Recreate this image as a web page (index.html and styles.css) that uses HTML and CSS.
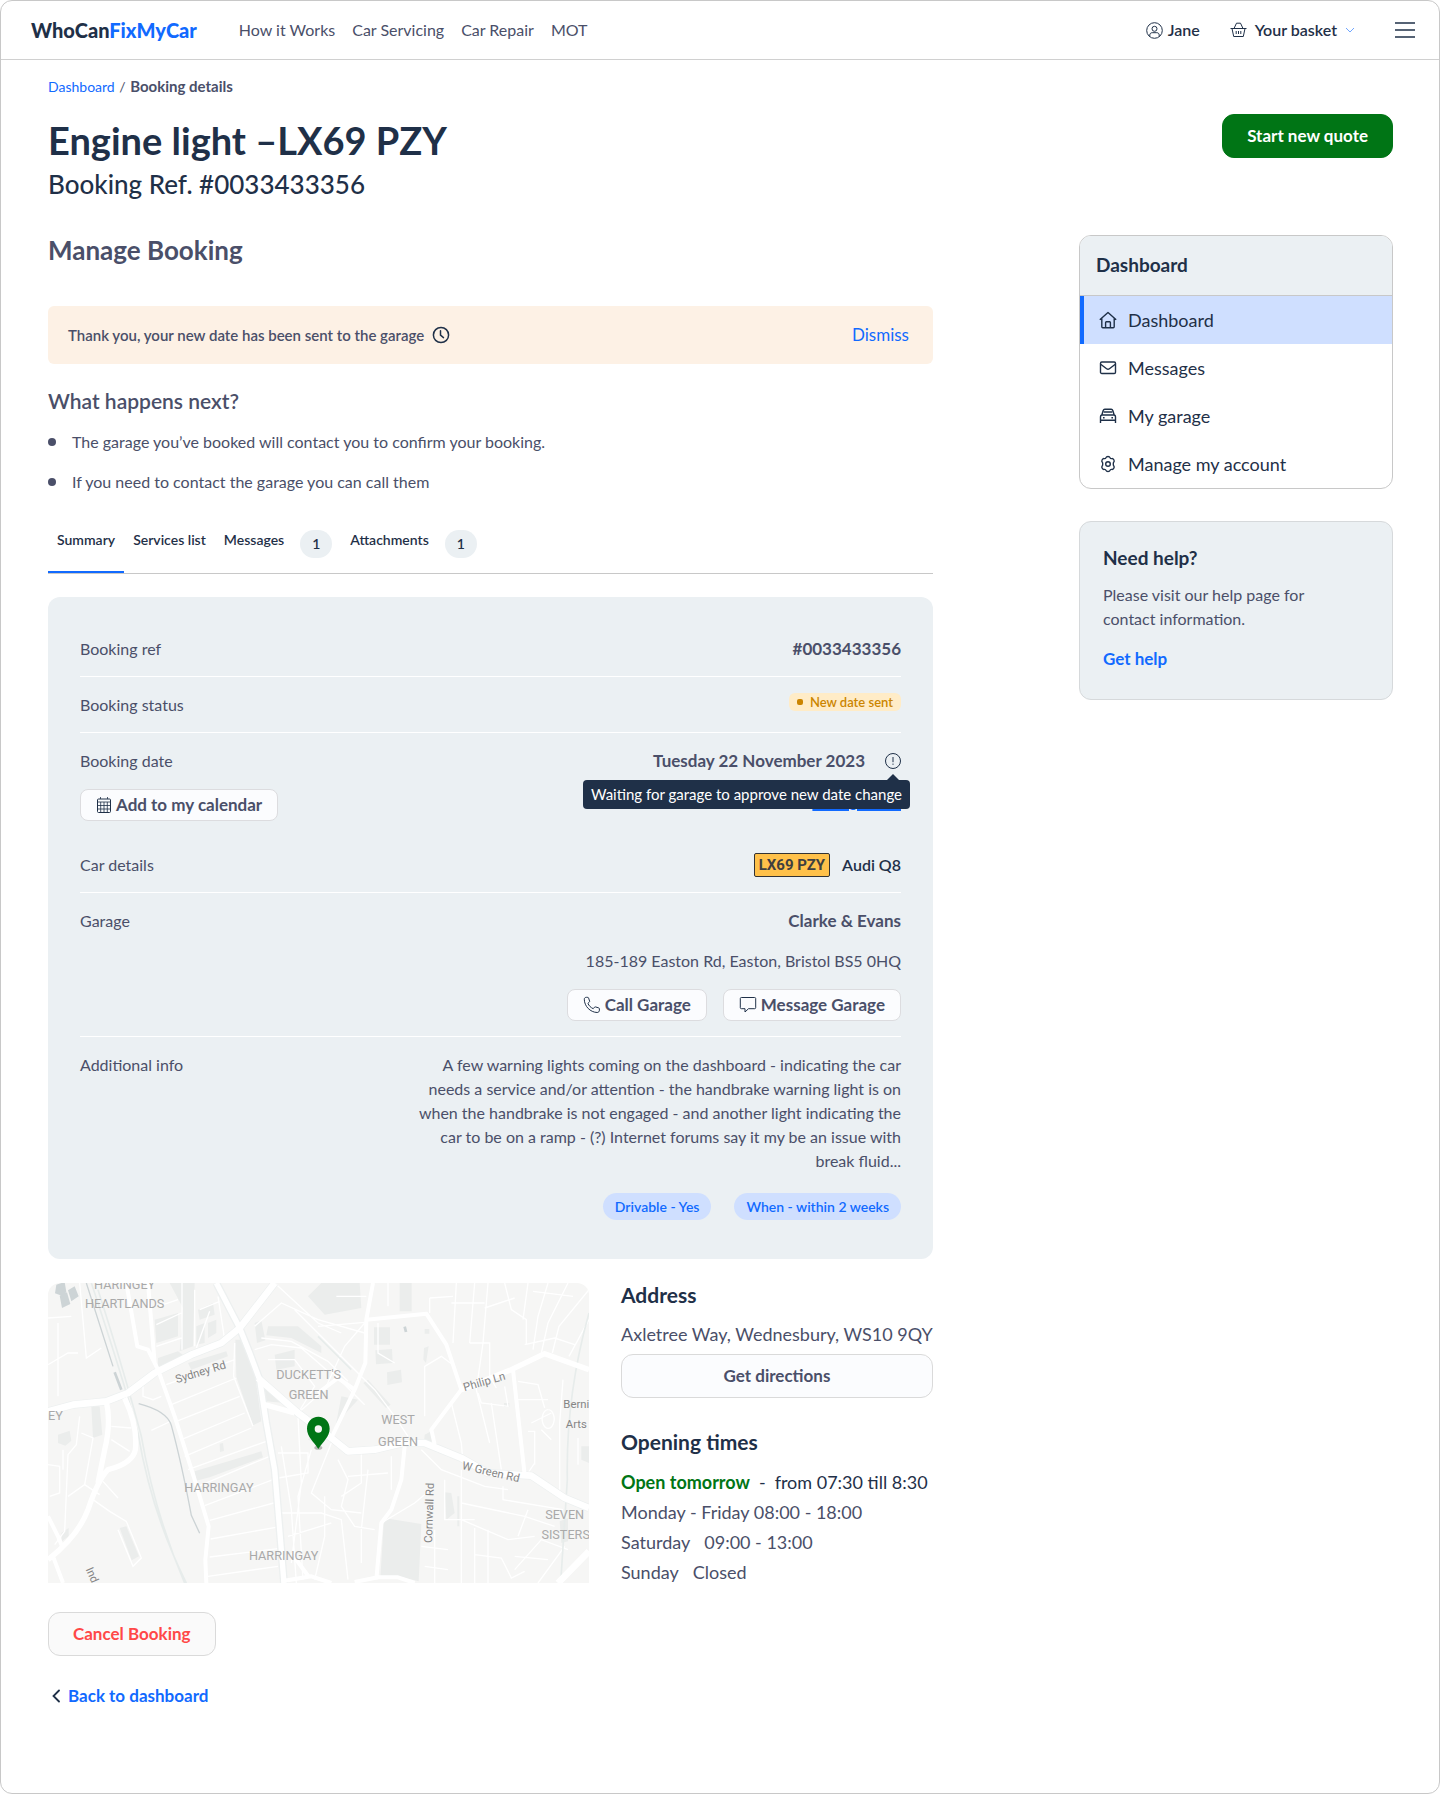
FILE: index.html
```
<!DOCTYPE html>
<html lang="en">
<head>
    <meta charset="UTF-8">
    <meta name="viewport" content="width=device-width, initial-scale=1.0">
    <title>Booking details - WhoCanFixMyCar</title>
    <link rel="stylesheet" href="styles.css">
</head>
<body>
<div class="page">
    <header class="topbar">
        <a href="#" class="logo">WhoCan<span>FixMyCar</span></a>
        <nav class="nav">
            <a href="#">How it Works</a>
            <a href="#">Car Servicing</a>
            <a href="#">Car Repair</a>
            <a href="#">MOT</a>
        </nav>
        <div class="user-nav">
            <a href="#" class="user-link">
                <svg width="17" height="17" viewBox="0 0 17 17" fill="none" stroke="currentColor"><circle cx="8.5" cy="8.5" r="7.8"/><circle cx="8.5" cy="6.8" r="2.5"/><path d="M3.8 14.3v-1.2c0-1.5 1-2.4 2.4-2.4h4.6c1.4 0 2.4.9 2.4 2.4v1.2"/></svg>
                Jane
            </a>
            <button type="button" class="basket">
                <svg width="17" height="16" viewBox="0 0 17 16" fill="none" stroke="currentColor"><path d="M.5 6.5h16M2 6.5l1.7 8h9.6l1.7-8M4 6.5l2.5-5.3M13 6.5l-2.5-5.3M6.5 1.2h4M6.2 9v3M8.5 9v3M10.8 9v3"/></svg>
                Your basket
                <svg class="basket-arrow" width="10" height="6" viewBox="0 0 10 6" fill="none" stroke="currentColor"><path d="M1 1l4 4 4-4"/></svg>
            </button>
            <button type="button" class="burger" aria-label="Menu">
                <svg width="20" height="16" viewBox="0 0 20 16" fill="none" stroke="currentColor" stroke-width="1.4"><path d="M0 1h20M0 8h20M0 15h20"/></svg>
            </button>
        </div>
    </header>

    <div class="content">
        <nav class="breadcrumb" aria-label="Breadcrumb">
            <a href="#">Dashboard</a> <span>/</span> <strong>Booking details</strong>
        </nav>

        <div class="page-head">
            <div>
                <h1>Engine light –LX69 PZY</h1>
                <p class="subtitle">Booking Ref. #0033433356</p>
            </div>
            <button type="button" class="btn btn-green">Start new quote</button>
        </div>

        <div class="columns">
            <main class="main">
                <h2 class="manage-title">Manage Booking</h2>

                <div class="alert">
                    <p>Thank you, your new date has been sent to the garage</p>
                    <svg width="18" height="18" viewBox="0 0 18 18" fill="none" stroke="currentColor" stroke-width="1.5" stroke-linecap="round"><circle cx="9" cy="9" r="7.6"/><path d="M8.5 4.8v4.4l3 2.4"/></svg>
                    <button type="button" class="dismiss">Dismiss</button>
                </div>

                <h3 class="next-title">What happens next?</h3>
                <ul class="next-list">
                    <li>The garage you’ve booked will contact you to confirm your booking.</li>
                    <li>If you need to contact the garage you can call them</li>
                </ul>

                <div class="tabs" role="tablist">
                    <button type="button" role="tab" class="tab active" aria-selected="true">Summary</button>
                    <button type="button" role="tab" class="tab">Services list</button>
                    <button type="button" role="tab" class="tab">Messages <span class="count">1</span></button>
                    <button type="button" role="tab" class="tab">Attachments <span class="count">1</span></button>
                </div>

                <dl class="summary">
                    <div class="row">
                        <dt>Booking ref</dt>
                        <dd><strong>#0033433356</strong></dd>
                    </div>
                    <div class="row">
                        <dt>Booking status</dt>
                        <dd><span class="status">New date sent</span></dd>
                    </div>
                    <div class="row row-date">
                        <dt>
                            Booking date
                            <button type="button" class="btn-small">
                                <svg width="16" height="18" viewBox="0 0 16 18" fill="none" stroke="currentColor"><rect x="1.5" y="3" width="13" height="13.5" rx="1"/><path d="M1.5 6h13M1.5 9.5h13M1.5 13h13M4.7 6v10.5M8 6v10.5M11.3 6v10.5M4.5 1v2M11.5 1v2" stroke-width=".8"/></svg>
                                Add to my calendar
                            </button>
                        </dt>
                        <dd>
                            <div class="date">
                                <strong>Tuesday 22 November 2023</strong>
                                <span class="info">
                                    <svg width="16" height="16" viewBox="0 0 16 16" fill="none" stroke="currentColor"><circle cx="8" cy="8" r="7.5"/><path d="M8 4v5.2M8 10.6v1.2"/></svg>
                                    <span class="tooltip" role="tooltip">Waiting for garage to approve new date change</span>
                                </span>
                            </div>
                            <a href="#" class="change-link">Change date</a>
                        </dd>
                    </div>
                    <div class="row">
                        <dt>Car details</dt>
                        <dd class="car"><span class="plate">LX69 PZY</span> <span>Audi Q8</span></dd>
                    </div>
                    <div class="row">
                        <dt>Garage</dt>
                        <dd>
                            <strong>Clarke &amp; Evans</strong>
                            <p class="garage-address">185-189 Easton Rd, Easton, Bristol BS5 0HQ</p>
                            <div class="garage-actions">
                                <button type="button" class="btn-small">
                                    <svg width="18" height="18" viewBox="0 0 18 18" fill="none" stroke="currentColor" stroke-linejoin="round"><path d="M1.3 3.2C1.3 2 2.2 1.3 3.4 1.3l1.4.1c.4 0 .7.3.8.7l1 3c.1.4 0 .7-.3 1L4.9 7.4c1 2.3 2.9 4.2 5.3 5.3l1.3-1.5c.3-.3.7-.4 1-.3l3.2 1c.4.1.7.4.7.8v1.5c0 1.300-.9 2.300-2.200 2.300C7.300 16.300 1.300 10.300 1.300 3.200z"/></svg>
                                    Call Garage
                                </button>
                                <button type="button" class="btn-small">
                                    <svg width="18" height="18" viewBox="0 0 18 18" fill="none" stroke="currentColor" stroke-linejoin="round"><path d="M2.3 1.5h13.4c.6 0 1 .4 1 1v9.2c0 .6-.4 1-1 1H9.500L6 16v-3.300H2.300c-.6 0-1-.4-1-1V2.500c0-.6.4-1 1-1z"/></svg>
                                    Message Garage
                                </button>
                            </div>
                        </dd>
                    </div>
                    <div class="row">
                        <dt>Additional info</dt>
                        <dd>
                            <p class="notes">A few warning lights coming on the dashboard - indicating the car needs a service and/or attention - the handbrake warning light is on when the handbrake is not engaged - and another light indicating the car to be on a ramp - (?) Internet forums say it my be an issue with break fluid...</p>
                            <div class="tags">
                                <span class="tag">Drivable - Yes</span>
                                <span class="tag">When - within 2 weeks</span>
                            </div>
                        </dd>
                    </div>
                </dl>

                <div class="location">
                    <svg class="map" viewBox="0 0 1623 900" preserveAspectRatio="xMidYMid slice" role="img" aria-label="Map of the garage">
                        <rect width="1623" height="900" fill="#f6f6f5"/>
                        <!-- blocks and parks -->
                        <g fill="#ebedec">
                            <path d="M562 170l25 0 35 110 18 135-25 12-50-145zM632 295l80 65-60-5zM365 0h75l-5 190-40 15 10-130zM320 110l70-20v70l-65 20zM450 80l45-20 5 35-45 15zM445 130l25-10v60l-25 5zM480 120l25-10v40l-25 15z"/>
                            <path d="M330 225l60-20 20 15-80 40zM420 240l115-35 5 15-110 40zM440 565l200-60 5 18-160 60-40 10zM515 482l10-2 3 24-12 3zM130 370h25l8 85-28 10zM30 455l35-12 5 30-18 15-22-8zM215 735l20-5 38 90-22 12z"/>
                            <path d="M620 120l20-8 12 60-25 8zM660 130h90l70 60v20l-90-45-75-8zM680 215l60-15v50l-55 10zM780 40l40-40h115l5 75-110 20zM1055 0h36v85h-36zM978 133h48v52h-48zM982 202l50-4 2 42-50 4zM1017 268l42-8 3 38-44 8zM960 290l68 75-14 10-68-75zM780 470l35-40-5 50zM880 340l50 10-50 55-20 40z"/>
                            <path d="M1008 705l112 18-8 172-50-12-65 2zM1190 628l20 2 10 60-25 20zM1228 640h6v90h-6zM1600 490h23v50l-23-10zM1535 715l25-10v70l-20 5zM1130 455l20-10 8 30h-30zM40 750l22-15v25l-20 15zM1128 195l14-5-8 50-8-10zM1130 138h14v14h-14zM1368 360h16v12h-16z"/>
                        </g>
                        <g fill="#cdd4d6">
                            <path d="M25 5l25-8 5 30-12 12-22-8zM35 38l22-10 10 35-25 12zM60 22l20-12 12 30-22 15zM1066 132l8-2 4 16-8 2z"/>
                        </g>
                        <!-- side streets -->
                        <g fill="none" stroke="#fff" stroke-width="4">
                            <path d="M95 0l20 225 45-30M0 105l70-5M30 120v220M0 245l60-35h30M325 125l75-35M325 190l75-25M330 70l60-20M402 0v200M440 20v170M455 80l60-25M445 195l40-110M510 40l20 130"/>
                            <path d="M355 305l205-75M370 365l195-80M385 415l190-75M400 470l190-80M410 520l200-85M420 560l235-85M450 610l215-90M470 668l205-78M485 712l192-52M488 768l195-35M485 822l205-25M480 880l210-30M560 180l-3 100 58 150"/>
                            <path d="M285 300v40l30 10 25-10M310 442l60-28M190 430l60 5M190 470l55 35M95 400l-10 85-25 30-10 230-30 40M100 450l35 15-25 140-50 35M110 605l45 30M165 595l45 50M135 650l50 35 50 30 45 110-25 25-45-110M0 545l35 5v80l-30 10M45 500v60"/>
                            <path d="M620 130l80-70 110 50 140 40M640 165l90 10 110 60 60 60M620 200l50-15 90 10 80 70M660 230h80l60 80-50 80M680 0l130 120 70 30M640 60l40-60M740 80l240 240 60 80 40 60M850 265l100 100M810 130l140-12M950 120l-60 70-60 130-80 70"/>
                            <path d="M865 40h90M1020 0v70M990 120v90l50 30M1145 45l70-5M1145 45v45M1225 0l-10 180M1280 0l-15 180M1320 0l-15 180-20 140 40 160M1310 75l90-30M1370 0l20 80 45 30v75M1440 0l-15 110M1500 0l-30 100-15 100M1560 0l-60 120-20 90M1623 20l-90 110-20 80M1623 110l-60 110M1455 25l120 15M1430 185l90-20 60 20M1265 180h60v100l20 35M1210 60h100"/>
                            <path d="M1130 400v-150l50-30 40 30M1210 360l30 120 5 60M1290 330l10 30 80 10-10-60M1330 360l30 200M1410 295l60 10 20 70M1450 420l60-30M1480 440l30 30M1500 380a18 28 0 1 0 1 0M1545 290l-10 130v200M1440 445h20v100M1590 465v80M1460 540l-20 30M1400 350h100"/>
                            <path d="M700 490l30 190 15 220M750 400l10 200-30 240M790 500l-40 140 15 250M850 480l-60 150 60 50 90 10M870 530l30 60-20 80 40 60 60 10M940 510v90l-60 40M900 580l120-10M690 510h90v60l-90 15M700 690h120l60 20 20 180M720 760l130-40M830 640v120l-30 130M960 560l-20 180v100M1030 520v100M1000 720l100-60 60-50"/>
                            <path d="M1120 500l60 60 130 50 70 10M1240 560v340M1190 590v120h90M1240 660l190 40 90 30M1240 710l140 60 80-10M1365 610v40l180 30M1440 680l-30 80M1280 735v165M1320 740v160M1160 740v160M1120 790l80 10M1280 815l80 10 30 60 40-20M1400 860l80-90 80 30M1400 820l100 10M1470 900l80-110M1130 850l70 10"/>
                        </g>
                        <!-- railway -->
                        <g fill="none" stroke="#e7eceb" stroke-width="5">
                            <path d="M130 0q90 270 140 450 40 240 145 450M150 20q80 250 130 440 40 230 130 440M1623 90q-70 250-65 500l-20 310M810 160l100 100"/>
                        </g>
                        <path d="M115 0l80 250M272 362q85 22 98 65 30 110 60 270l25 54" fill="none" stroke="#ccd3d5" stroke-width="4"/>
                        <path d="M200 268l20 52" stroke="#ccd3d5" stroke-width="8"/>
                        <!-- main roads -->
                        <g fill="none" stroke="#edf0f0" stroke-linejoin="round" stroke-width="24">
                            <path d="M0 385l75-20 100-10 65-25 80-60 110-55 90-35 55-45 105-135M505 0l70 135 30 75 30 80 20 130 25 140 15 180 13 160M630 285l120 105 100 75 50 40 80-5 85-20h65l110 45 80 45 130 8 100 67 73 30"/>
                        </g>
                        <g fill="none" stroke="#fff" stroke-linejoin="round">
                            <path stroke-width="20" d="M0 385l75-20 100-10 65-25 80-60 110-55 90-35 55-45 105-135M630 285l120 105 100 75 50 40 80-5 85-20h65l110 45 80 45 130 8 100 67 73 30M1530 900l93-95"/>
                            <path stroke-width="16" d="M505 0l70 135 30 75 30 80 20 130 25 140 15 180 13 160M230 345q40 85 32 155-7 40-82 60-30 30-60 120-30 80-120 150M175 355q15 65-5 145l-20 100M650 365l90 25M1240 320l150-60 100-48 133 48"/>
                            <path stroke-width="12" d="M975 0l-20 110-3 130-32 80-70 145M955 110l180-18 60 93 45 135-90 120 10 45M1395 260l35 315M1070 490l-10 100-30 90-30 40-15 170M235 0l33 190 32 10 30 60 50 140 60 190 42 140-10 100 3 70M300 0l20 240M0 700l30 60 12 30M15 820l30 80M700 895l90-15 60 20M920 897l70-14h60l50 17M730 810l55 75M920 320l-50-35-60 45"/>
                        </g>
                        <g class="map-area">
                            <text x="230" y="18">HARINGEY</text>
                            <text x="230" y="76">HEARTLANDS</text>
                            <text x="782" y="287">DUCKETT'S</text>
                            <text x="782" y="347">GREEN</text>
                            <text x="1050" y="424">WEST</text>
                            <text x="1050" y="489">GREEN</text>
                            <text x="513" y="626">HARRINGAY</text>
                            <text x="707" y="830">HARRINGAY</text>
                            <text x="22" y="410">EY</text>
                            <text x="1550" y="708">SEVEN</text>
                            <text x="1553" y="769">SISTERS</text>
                        </g>
                        <g class="map-road">
                            <text transform="translate(461 278) rotate(-17)">Sydney Rd</text>
                            <text transform="translate(1312 307) rotate(-16)">Philip Ln</text>
                            <text transform="translate(1326 578) rotate(13)">W Green Rd</text>
                            <text transform="translate(1155 690) rotate(-88)">Cornwall Rd</text>
                            <text transform="translate(122 880) rotate(66)">Ind</text>
                            <text x="1585" y="374">Berni</text>
                            <text x="1585" y="435">Arts</text>
                        </g>
                        <ellipse cx="811" cy="494" rx="12" ry="6" fill="#000" opacity=".25"/>
                        <path d="M811 401c-20 0-34 15-34 36 0 24 20 38 34 61 14-23 34-37 34-61 0-21-14-36-34-36z" fill="#007515"/>
                        <circle cx="811" cy="438" r="11" fill="#f6f6f5"/>
                    </svg>

                    <div class="garage-info">
                        <h3>Address</h3>
                        <p class="address">Axletree Way, Wednesbury, WS10 9QY</p>
                        <button type="button" class="btn btn-light">Get directions</button>
                        <h3 class="times-title">Opening times</h3>
                        <p class="open"><strong>Open tomorrow</strong> <span>-</span> <span>from 07:30 till 8:30</span></p>
                        <p class="hours"><span>Monday - Friday 08:00 - 18:00</span></p>
                        <p class="hours"><span>Saturday</span> <span>09:00 - 13:00</span></p>
                        <p class="hours"><span>Sunday</span> <span>Closed</span></p>
                    </div>
                </div>

                <button type="button" class="btn btn-cancel">Cancel Booking</button>

                <a href="#" class="back">
                    <svg width="8" height="14" viewBox="0 0 8 14" fill="none" stroke="currentColor" stroke-width="1.8" stroke-linecap="round"><path d="M7 1.5L1.5 7 7 12.5"/></svg>
                    Back to dashboard
                </a>
            </main>

            <aside class="sidebar">
                <nav class="side-nav">
                    <h2>Dashboard</h2>
                    <a href="#" class="current">
                        <svg width="18" height="18" viewBox="0 0 18 18" fill="none" stroke="currentColor" stroke-width="1.4" stroke-linejoin="round"><path d="M.8 8.8L9 1.5l8.2 7.3M2.8 7.2v8.500c0 .6.4 1 1 1h10.400c.6 0 1-.4 1-1V7.200M6.600 16.500v-5c0-.5.3-.8.8-.8h3.200c.5 0 .8.3.8.8v5"/></svg>
                        Dashboard
                    </a>
                    <a href="#">
                        <svg width="18" height="18" viewBox="0 0 18 18" fill="none" stroke="currentColor" stroke-width="1.4" stroke-linejoin="round"><rect x="1.5" y="3" width="15" height="11.5" rx="1.3"/><path d="M1.7 5.3L7.600 9.800c.9.7 1.900.7 2.800 0l5.900-4.500"/></svg>
                        Messages
                    </a>
                    <a href="#">
                        <svg width="18" height="18" viewBox="0 0 18 18" fill="none" stroke="currentColor" stroke-width="1.4" stroke-linejoin="round"><path d="M1.500 16V9.800c0-1 .5-1.600 1.300-1.800l1.400-4.500C4.500 2.600 5 2.300 5.800 2.300h6.400c.8 0 1.300.3 1.600 1.200L15.200 8c.8.2 1.300.8 1.300 1.800V16M1.500 13.300h15M2.800 8h12.400M4.800 5h8.400"/><path d="M4 10.700h1.600M12.400 10.700H14"/></svg>
                        My garage
                    </a>
                    <a href="#">
                        <svg width="18" height="18" viewBox="0 0 18 18" fill="none" stroke="currentColor" stroke-width="1.4" stroke-linejoin="round"><circle cx="9" cy="9" r="2.3"/><path d="M7 2.600C7.500 1.100 10.500 1.100 11 2.600c.3.900.9 1.200 1.800 1 1.600-.3 3.100 2.200 2 3.400-.7.700-.7 3.300 0 4 1.100 1.200-.4 3.700-2 3.400-.9-.2-1.500.1-1.800 1-.5 1.500-3.500 1.500-4 0-.3-.9-.9-1.200-1.800-1-1.600.3-3.100-2.200-2-3.400.7-.7.7-3.300 0-4-1.100-1.200.4-3.700 2-3.400.9.200 1.500-.1 1.800-1z"/></svg>
                        Manage my account
                    </a>
                </nav>

                <section class="help">
                    <h2>Need help?</h2>
                    <p>Please visit our help page for contact information.</p>
                    <a href="#">Get help</a>
                </section>
            </aside>
        </div>
    </div>
</div>
</body>
</html>
```
FILE: styles.css
```
* {
    box-sizing: border-box;
}
body {
    margin: 0;
    font-family: Lato, "Open Sans", sans-serif;
    font-size: 16px;
    line-height: 24px;
    color: #4a4f69;
    background: #fff;
}
h1, h2, h3, p, ul, dl, dd {
    margin: 0;
    padding: 0;
}
a {
    color: #116aff;
    text-decoration: none;
}
button {
    font: inherit;
    color: inherit;
    background: none;
    border: none;
    padding: 0;
    cursor: pointer;
}
svg {
    display: block;
    flex-shrink: 0;
}
.page {
    min-height: 100vh;
    border: 1px solid #c8c8c8;
    border-radius: 12px;
}

/* header */
.topbar {
    display: flex;
    align-items: center;
    height: 59px;
    padding: 0 24px 0 30px;
    border-bottom: 1px solid #d0d0d0;
}
.logo {
    font-size: 20px;
    font-weight: 900;
    color: #1f3048;
}
.logo span {
    color: #116aff;
}
.nav {
    display: flex;
    gap: 17px;
    margin-left: 42px;
}
.nav a {
    color: #4a4f69;
}
.user-nav {
    display: flex;
    align-items: center;
    margin-left: auto;
    color: #1f3048;
    font-weight: 600;
}
.user-link {
    display: flex;
    align-items: center;
    gap: 5px;
    color: #1f3048;
}
.basket {
    display: flex;
    align-items: center;
    gap: 8px;
    margin-left: 30px;
}
.basket-arrow {
    color: #6fa5ff;
}
.burger {
    margin-left: 40px;
}

/* page heading */
.content {
    padding: 16px 46px 64px 47px;
}
.breadcrumb {
    font-size: 14px;
    line-height: 20px;
}
.breadcrumb span {
    margin: 0 1px;
}
.breadcrumb strong {
    font-size: 15px;
}
.page-head {
    display: flex;
    justify-content: space-between;
    align-items: flex-start;
    padding-top: 17px;
}
h1 {
    font-size: 38px;
    line-height: 52px;
    color: #1f3048;
}
.subtitle {
    font-size: 26px;
    line-height: 36px;
    font-weight: 500;
    color: #1f3048;
}
.btn {
    height: 44px;
    padding: 0 24px;
    border: 1px solid #dadada;
    border-radius: 12px;
    font-size: 17px;
    font-weight: bold;
}
.btn-green {
    color: #fff;
    background: #007515;
    border-color: #007515;
}
.columns {
    display: flex;
    justify-content: space-between;
    align-items: flex-start;
    gap: 40px;
    padding-top: 33px;
}
.main {
    flex: 1;
    max-width: 885px;
}

/* booking intro */
.manage-title {
    font-size: 26px;
    line-height: 30px;
}
.alert {
    display: flex;
    align-items: center;
    gap: 8px;
    height: 58px;
    margin-top: 41px;
    padding: 0 24px 0 20px;
    border-radius: 6px;
    font-size: 15px;
    font-weight: 600;
    background: #fdf1e5;
}
.alert svg {
    color: #1f3048;
}
.dismiss {
    margin-left: auto;
    font-size: 17px;
    font-weight: 400;
    color: #116aff;
}
.next-title {
    margin-top: 22px;
    font-size: 21px;
    line-height: 30px;
    font-weight: 600;
}
.next-list {
    display: grid;
    gap: 16px;
    margin-top: 14px;
    list-style: none;
}
.next-list li {
    display: flex;
    align-items: center;
    gap: 16px;
}
.next-list li::before {
    content: "";
    width: 8px;
    height: 8px;
    border-radius: 50%;
    background: #4a4f69;
}

/* tabs */
.tabs {
    display: flex;
    height: 52px;
    margin-top: 28px;
    border-bottom: 1px solid #c8c8c8;
    font-size: 14px;
    font-weight: 600;
    color: #1f3048;
}
.tab {
    display: flex;
    align-items: flex-start;
    gap: 16px;
    padding: 6px 9px 0;
}
.tab.active {
    border-bottom: 2px solid #116aff;
}
.count {
    width: 32px;
    height: 28px;
    margin-top: 2px;
    border-radius: 14px;
    line-height: 28px;
    background: #ebf0f3;
}

/* summary */
.summary {
    margin-top: 23px;
    padding: 24px 32px;
    border-radius: 12px;
    background: #ebf0f3;
}
.row {
    display: flex;
    justify-content: space-between;
    padding: 16px 0 15px;
    border-bottom: 1px solid #fff;
}
.row:last-child {
    border-bottom: none;
}
.row dd {
    max-width: 500px;
    text-align: right;
}
.row strong {
    font-size: 17px;
}
.row-date {
    padding-bottom: 16px;
    border-bottom: none;
}
.row .car {
    display: flex;
    gap: 12px;
    font-weight: 600;
    color: #1f3048;
}
.btn-small {
    display: flex;
    align-items: center;
    gap: 4px;
    height: 32px;
    padding: 0 15px;
    border: 1px solid #dcdcdf;
    border-radius: 8px;
    font-size: 17px;
    font-weight: bold;
    background: #fbfcfe;
}
.btn-small svg {
    color: #1f3048;
}
dt .btn-small {
    margin-top: 16px;
}
.status {
    display: flex;
    align-items: center;
    gap: 7px;
    height: 18px;
    padding: 0 8px;
    border-radius: 6px;
    font-size: 13px;
    font-weight: 600;
    color: #cb8500;
    background: #ffecc7;
}
.status::before {
    content: "";
    width: 6px;
    height: 6px;
    border-radius: 2px;
    background: #cb8500;
}
.date {
    display: flex;
    align-items: center;
    justify-content: flex-end;
    gap: 20px;
}
.info {
    position: relative;
    color: #1f3048;
}
.tooltip {
    position: absolute;
    z-index: 1;
    top: 27px;
    right: -9px;
    padding: 0 8px;
    border-radius: 4px;
    font-size: 15px;
    line-height: 29px;
    white-space: nowrap;
    color: #fff;
    background: #1f3048;
}
.tooltip::before {
    content: "";
    position: absolute;
    top: -6px;
    right: 11px;
    border: 6px solid transparent;
    border-top: none;
    border-bottom-color: #1f3048;
}
.change-link {
    display: inline-block;
    margin-top: 16px;
    font-weight: 600;
    text-decoration: underline;
    text-decoration-thickness: 2px;
    text-underline-offset: 2px;
}
.plate {
    padding: 0 4px;
    border: 1px solid #333;
    border-radius: 2px;
    font-family: Roboto, sans-serif;
    font-size: 15px;
    line-height: 22px;
    font-weight: bold;
    color: #3f3f3f;
    background: #ffc14a;
}
.garage-address {
    margin-top: 16px;
}
.garage-actions {
    display: flex;
    justify-content: flex-end;
    gap: 16px;
    margin-top: 16px;
}
.tags {
    display: flex;
    justify-content: flex-end;
    gap: 23px;
    margin-top: 20px;
}
.tag {
    padding: 0 12px;
    border-radius: 14px;
    font-size: 14px;
    line-height: 27px;
    font-weight: 600;
    color: #116aff;
    background: #cfdfff;
}

/* map and garage info */
.location {
    display: grid;
    grid-template-columns: 541fr 312fr;
    gap: 32px;
    margin-top: 24px;
}
.map {
    width: 100%;
    height: 300px;
    border-radius: 12px 12px 0 0;
}
.map-area, .map-road {
    font-family: Roboto, sans-serif;
    font-size: 38px;
    text-anchor: middle;
    fill: #a9a9a9;
}
.map-road {
    font-size: 34px;
    fill: #858585;
}
.garage-info h3 {
    font-size: 21px;
    line-height: 24px;
    color: #1f3048;
}
.address {
    margin-top: 15px;
    font-size: 18px;
}
.btn-light {
    width: 100%;
    margin-top: 8px;
    background: #fbfcfe;
}
.garage-info .times-title {
    margin-top: 32px;
}
.open {
    display: flex;
    gap: 9px;
    margin-top: 16px;
    font-size: 18px;
    color: #1f3048;
}
.open strong {
    color: #007515;
}
.hours {
    display: flex;
    gap: 14px;
    margin-top: 6px;
    font-size: 18px;
}
.btn-cancel {
    display: block;
    margin-top: 28px;
    color: #ff4848;
    background: #fafafa;
}
.back {
    display: flex;
    align-items: center;
    gap: 8px;
    margin-top: 28px;
    padding-left: 4px;
    font-size: 17px;
    font-weight: bold;
}
.back svg {
    color: #1f3048;
}

/* sidebar */
.sidebar {
    width: 314px;
}
.side-nav {
    overflow: hidden;
    border: 1px solid #c8c8c8;
    border-radius: 12px;
}
.side-nav h2 {
    height: 60px;
    padding: 0 16px;
    border-bottom: 1px solid #c8c8c8;
    font-size: 19px;
    line-height: 58px;
    color: #1f3048;
    background: #ebf0f3;
}
.side-nav a {
    display: flex;
    align-items: center;
    gap: 11px;
    height: 48px;
    padding-left: 19px;
    font-size: 18px;
    color: #1f3048;
}
.side-nav .current {
    padding-left: 15px;
    border-left: 4px solid #116aff;
    background: #cfdfff;
}
.help {
    margin-top: 32px;
    padding: 24px 60px 28px 23px;
    border: 1px solid #d6d9db;
    border-radius: 12px;
    background: #ebf0f3;
}
.help h2 {
    font-size: 19px;
    line-height: 24px;
    color: #1f3048;
}
.help p {
    margin: 13px 0 16px;
}
.help a {
    font-size: 17px;
    font-weight: bold;
}
```
